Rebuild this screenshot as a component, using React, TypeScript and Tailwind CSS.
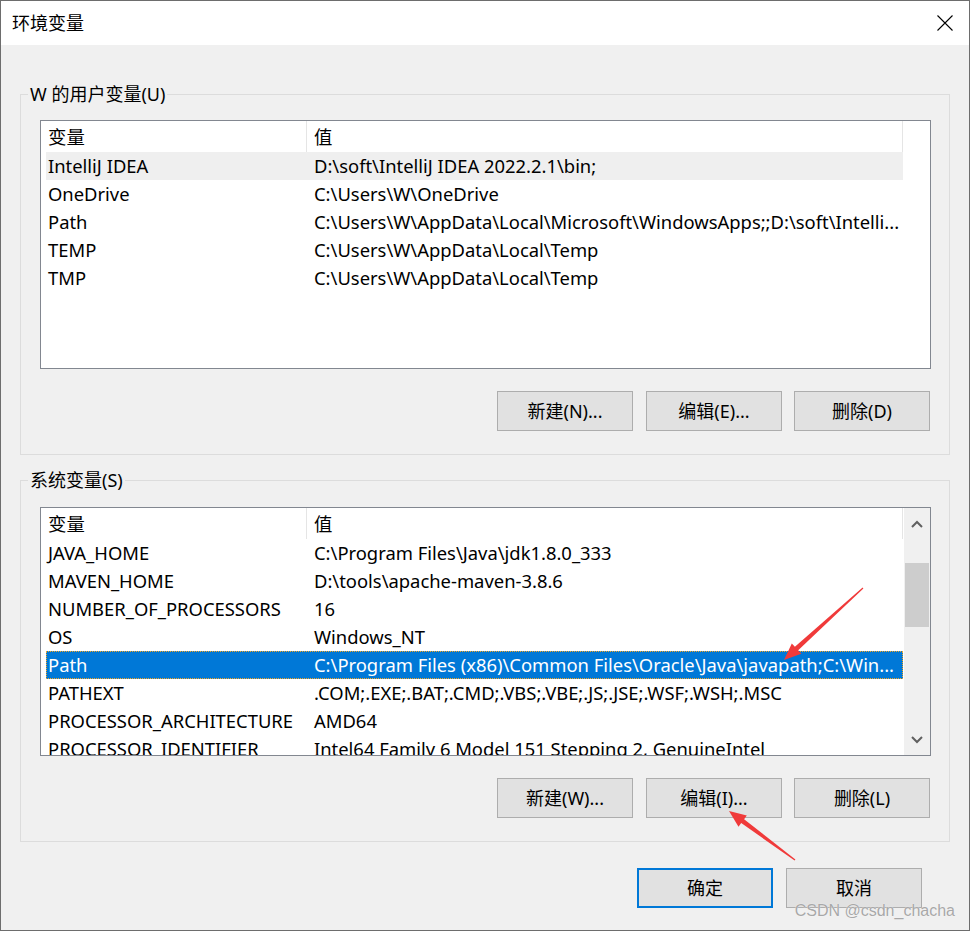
import React from 'react'

// Windows 10 “环境变量” dialog

const FONT = "font-['Noto_Sans','Noto_Sans_CJK_SC',sans-serif]"

interface EnvVar {
  name: string
  value: string
}

const userVars: EnvVar[] = [
  { name: 'IntelliJ IDEA', value: 'D:\\soft\\IntelliJ IDEA 2022.2.1\\bin;' },
  { name: 'OneDrive', value: 'C:\\Users\\W\\OneDrive' },
  { name: 'Path', value: 'C:\\Users\\W\\AppData\\Local\\Microsoft\\WindowsApps;;D:\\soft\\Intelli...' },
  { name: 'TEMP', value: 'C:\\Users\\W\\AppData\\Local\\Temp' },
  { name: 'TMP', value: 'C:\\Users\\W\\AppData\\Local\\Temp' },
]

const sysVars: EnvVar[] = [
  { name: 'JAVA_HOME', value: 'C:\\Program Files\\Java\\jdk1.8.0_333' },
  { name: 'MAVEN_HOME', value: 'D:\\tools\\apache-maven-3.8.6' },
  { name: 'NUMBER_OF_PROCESSORS', value: '16' },
  { name: 'OS', value: 'Windows_NT' },
  { name: 'Path', value: 'C:\\Program Files (x86)\\Common Files\\Oracle\\Java\\javapath;C:\\Win...' },
  { name: 'PATHEXT', value: '.COM;.EXE;.BAT;.CMD;.VBS;.VBE;.JS;.JSE;.WSF;.WSH;.MSC' },
  { name: 'PROCESSOR_ARCHITECTURE', value: 'AMD64' },
  { name: 'PROCESSOR_IDENTIFIER', value: 'Intel64 Family 6 Model 151 Stepping 2, GenuineIntel' },
]

function Button({ label, primary = false }: { label: string; primary?: boolean }) {
  return (
    <div
      className={`w-[136px] h-[40px] flex items-center justify-center bg-[#e1e1e1] text-[18px] text-black ${
        primary ? 'border-2 border-[#0078d7]' : 'border border-[#adadad]'
      }`}
    >
      {label}
    </div>
  )
}

function VarList({
  rows,
  hovered,
  selected,
  scrollbar = false,
}: {
  rows: EnvVar[]
  hovered?: number
  selected?: number
  scrollbar?: boolean
}) {
  return (
    <div className="h-[249px] border border-[#828790] bg-white flex overflow-hidden">
      <div className="w-[862px] pl-[5px] flex flex-col overflow-hidden">
        {/* 表头 */}
        <div className="h-[31px] shrink-0 flex text-[18.4px] border-r border-[#e5e5e5]">
          <div className="w-[261px] pl-[2px] flex items-center border-r border-[#e5e5e5]">变量</div>
          <div className="flex-1 pl-[7px] flex items-center">值</div>
        </div>
        {rows.map((row, i) => {
          const isSel = i === selected
          const isHover = i === hovered
          return (
            <div
              key={row.name}
              className={`h-[28px] shrink-0 flex items-center text-[18.4px] whitespace-nowrap ${
                isSel
                  ? 'bg-[#0078d7] text-white outline outline-1 outline-dotted outline-[#f5a623] -outline-offset-1'
                  : isHover
                    ? 'bg-[#efefef] text-black'
                    : 'text-black'
              }`}
            >
              <div className="w-[261px] pl-[2px] overflow-hidden">{row.name}</div>
              <div className="flex-1 pl-[7px] overflow-hidden">{row.value}</div>
            </div>
          )
        })}
      </div>
      <div className="flex-1" />
      {scrollbar && (
        <div className="w-[26px] shrink-0 bg-[#f0f0f0] flex flex-col items-center">
          <div className="h-[31px] w-full flex items-center justify-center">
            <svg width="12" height="8" viewBox="0 0 12 8">
              <path d="M1 7 L6 2 L11 7" fill="none" stroke="#606060" strokeWidth="2" />
            </svg>
          </div>
          <div className="h-[24px]" />
          <div className="w-[24px] h-[64px] bg-[#cdcdcd]" />
          <div className="flex-1" />
          <div className="h-[30px] w-full flex items-center justify-center">
            <svg width="12" height="8" viewBox="0 0 12 8">
              <path d="M1 1 L6 6 L11 1" fill="none" stroke="#606060" strokeWidth="2" />
            </svg>
          </div>
        </div>
      )}
    </div>
  )
}

function Group({
  title,
  children,
  className = '',
}: {
  title: string
  children: React.ReactNode
  className?: string
}) {
  return (
    <fieldset className={`border border-[#dcdcdc] p-0 m-0 min-w-0 ${className}`}>
      <legend className="ml-[7px] px-[2px] text-[18px] leading-[24px] text-black">{title}</legend>
      {children}
    </fieldset>
  )
}

function ButtonRow({ labels }: { labels: string[] }) {
  return (
    <div className="mt-[22px] flex justify-end pr-[1px]">
      <Button label={labels[0]} />
      <div className="w-[13px]" />
      <Button label={labels[1]} />
      <div className="w-[12px]" />
      <Button label={labels[2]} />
    </div>
  )
}

// 红色箭头：由尾到尖逐渐变宽
function arrowPoints(tx: number, ty: number, hx: number, hy: number) {
  const dx = hx - tx
  const dy = hy - ty
  const len = Math.sqrt(dx * dx + dy * dy)
  const ux = dx / len
  const uy = dy / len
  const nx = -uy
  const ny = ux
  const bx = hx - ux * 17
  const by = hy - uy * 17
  const p = (x: number, y: number) => `${x.toFixed(1)},${y.toFixed(1)}`
  return [
    p(tx + nx * 0.6, ty + ny * 0.6),
    p(bx + nx * 2.4, by + ny * 2.4),
    p(bx + nx * 7, by + ny * 7),
    p(hx, hy),
    p(bx - nx * 7, by - ny * 7),
    p(bx - nx * 2.4, by - ny * 2.4),
    p(tx - nx * 0.6, ty - ny * 0.6),
  ].join(' ')
}

export default function App() {
  return (
    <div className={`relative w-[970px] h-[931px] border border-[#6d6d6d] bg-[#f0f0f0] flex flex-col ${FONT}`}>
      {/* 标题栏 */}
      <div className="h-[44px] shrink-0 bg-white flex items-center justify-between pl-[11px] pr-[16px]">
        <span className="text-[18px] text-black">环境变量</span>
        <svg width="16" height="16" viewBox="0 0 16 16">
          <path d="M0.5 0.5 L15.5 15.5 M15.5 0.5 L0.5 15.5" stroke="#000" strokeWidth="1.1" />
        </svg>
      </div>

      <div className="flex flex-col pl-[19px] pr-[19px]">
        <Group title="W 的用户变量(U)" className="mt-[37px]">
          <div className="pl-[19px] pr-[18px] pt-[14px] pb-[23px]">
            <VarList rows={userVars} hovered={0} />
            <ButtonRow labels={['新建(N)...', '编辑(E)...', '删除(D)']} />
          </div>
        </Group>

        <Group title="系统变量(S)" className="mt-[13px]">
          <div className="pl-[19px] pr-[18px] pt-[15px] pb-[23px]">
            <VarList rows={sysVars} selected={4} scrollbar />
            <ButtonRow labels={['新建(W)...', '编辑(I)...', '删除(L)']} />
          </div>
        </Group>

        <div className="mt-[26px] flex justify-end gap-[13px] pr-[28px]">
          <Button label="确定" primary />
          <Button label="取消" />
        </div>
      </div>

      {/* 标注箭头 */}
      <svg className="absolute left-0 top-0 pointer-events-none" width="970" height="931">
        <polygon points={arrowPoints(862, 587, 783, 659)} fill="#f03a3a" />
        <polygon points={arrowPoints(794, 859, 728, 810)} fill="#f03a3a" />
      </svg>

      {/* 水印 */}
      <div className="absolute right-[14px] bottom-[7px] text-[16px] text-[#a8a8a8] font-['Liberation_Sans',sans-serif] [text-shadow:0_0_1px_#fff]">
        CSDN @csdn_chacha
      </div>
    </div>
  )
}
